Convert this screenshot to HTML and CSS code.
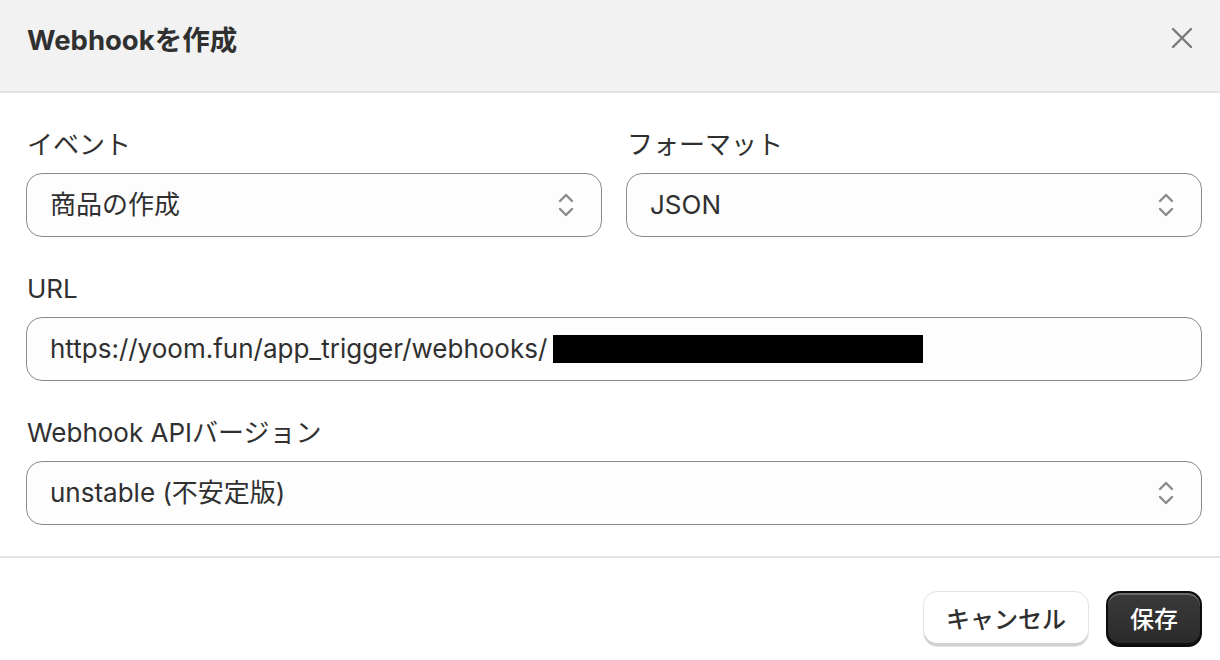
FILE: index.html
```html
<!DOCTYPE html>
<html lang="ja">
<head>
<meta charset="utf-8">
<link rel="stylesheet" href="styles.css">
</head>
<body>
<div class="modal">
  <header class="modal-header">
    <h1 class="title">Webhookを作成</h1>
    <button class="close" aria-label="閉じる">
      <svg width="22" height="22" viewBox="0 0 22 22"><path d="M2 2 L20 20 M20 2 L2 20" stroke="#7a7a7a" stroke-width="2.4" stroke-linecap="round" fill="none"/></svg>
    </button>
  </header>
  <main class="modal-body">
    <div class="row">
      <div class="field">
        <label class="label">イベント</label>
        <div class="control select">
          <span class="value">商品の作成</span>
          <svg class="chev" width="18" height="26" viewBox="0 0 18 26"><path d="M3 9 L9 3 L15 9 M3 17 L9 23 L15 17" stroke="#8a8a8a" stroke-width="2.4" stroke-linecap="round" stroke-linejoin="round" fill="none"/></svg>
        </div>
      </div>
      <div class="field">
        <label class="label">フォーマット</label>
        <div class="control select">
          <span class="value">JSON</span>
          <svg class="chev" width="18" height="26" viewBox="0 0 18 26"><path d="M3 9 L9 3 L15 9 M3 17 L9 23 L15 17" stroke="#8a8a8a" stroke-width="2.4" stroke-linecap="round" stroke-linejoin="round" fill="none"/></svg>
        </div>
      </div>
    </div>
    <div class="field">
      <label class="label">URL</label>
      <div class="control input">
        <span class="value">https://yoom.fun/app_trigger/webhooks/</span><span class="redact"></span>
      </div>
    </div>
    <div class="field">
      <label class="label">Webhook APIバージョン</label>
      <div class="control select">
        <span class="value">unstable (不安定版)</span>
        <svg class="chev" width="18" height="26" viewBox="0 0 18 26"><path d="M3 9 L9 3 L15 9 M3 17 L9 23 L15 17" stroke="#8a8a8a" stroke-width="2.4" stroke-linecap="round" stroke-linejoin="round" fill="none"/></svg>
      </div>
    </div>
  </main>
  <footer class="modal-footer">
    <button class="btn btn-secondary">キャンセル</button>
    <button class="btn btn-primary">保存</button>
  </footer>
</div>
</body>
</html>
```
FILE: styles.css
```css
html, body {
  margin: 0;
  padding: 0;
  background: #ffffff;
}
body {
  font-family: Inter, "Noto Sans CJK JP", sans-serif;
  color: #303030;
  width: 1220px;
  height: 660px;
  overflow: hidden;
}
.modal {
  display: flex;
  flex-direction: column;
}
.modal-header {
  height: 91px;
  background: #f2f2f2;
  border-bottom: 2px solid #e3e3e3;
  display: flex;
  align-items: center;
  justify-content: space-between;
  padding: 0 27px 0 27px;
}
.title {
  margin: 0;
  font-size: 27.5px;
  font-weight: 700;
  line-height: 32px;
  color: #303030;
  padding-bottom: 12px;
}
.close {
  border: 0;
  background: none;
  padding: 0;
  width: 22px;
  height: 22px;
  display: flex;
  margin-bottom: 15px;
}
.modal-body {
  padding: 36px 18px 31px 26px;
  display: flex;
  flex-direction: column;
  gap: 36px;
  border-bottom: 2px solid #e3e3e3;
}
.row {
  display: flex;
  gap: 24px;
}
.row .field {
  flex: 1;
}
.field {
  display: flex;
  flex-direction: column;
  gap: 12px;
}
.label {
  font-size: 26px;
  line-height: 32px;
  padding-left: 1px;
  color: #303030;
}
.control {
  height: 64px;
  box-sizing: border-box;
  border: 1.5px solid #8a8a8a;
  border-radius: 16px;
  background: #fdfdfd;
  display: flex;
  align-items: center;
  padding: 0 26px 0 23px;
  font-size: 26px;
}
.select {
  justify-content: space-between;
}
.value {
  line-height: 32px;
  color: #303030;
  white-space: nowrap;
}
.redact {
  display: inline-block;
  flex: none;
  width: 370px;
  height: 28px;
  margin-left: 6px;
  background: #000;
}
.chev {
  display: block;
}
.modal-footer {
  display: flex;
  justify-content: flex-end;
  gap: 17px;
  padding: 33px 18px 0 0;
}
.btn {
  height: 56px;
  box-sizing: border-box;
  border-radius: 14px;
  font-family: Inter, "Noto Sans CJK JP", sans-serif;
  font-size: 24px;
  font-weight: 500;
  padding: 0 0 4px 0;
  white-space: nowrap;
}
.btn-secondary {
  width: 166px;
  background: #ffffff;
  color: #303030;
  border: 1.5px solid #e3e3e3;
  box-shadow: inset 0 -3px 0 #d0d0d0;
}
.btn-primary {
  width: 96px;
  background: linear-gradient(#3a3a3a, #2a2a2a);
  color: #ffffff;
  border: 2px solid #0c0c0c;
  box-shadow: inset 0 2px 0 rgba(255,255,255,0.25), inset 0 -2px 0 rgba(0,0,0,0.6);
}
```
